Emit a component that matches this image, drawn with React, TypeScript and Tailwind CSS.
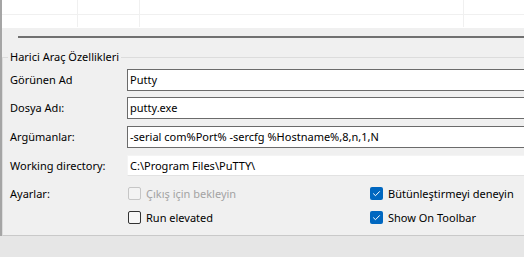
import React from "react";

const font = { fontFamily: '"Noto Sans", "Open Sans", sans-serif' };

function Box({ checked, disabled }: { checked?: boolean; disabled?: boolean }) {
  if (checked) {
    return (
      <span className="flex h-[13px] w-[13px] items-center justify-center rounded-[2px] bg-[#0067c0]">
        <svg width="13" height="13" viewBox="0 0 13 13" fill="none">
          <path d="M3.5 6.8 L5.5 8.7 L9.5 4.6" stroke="#ffffff" strokeWidth="1" strokeLinecap="round" strokeLinejoin="round" />
        </svg>
      </span>
    );
  }
  return (
    <span
      className={
        disabled
          ? "h-[13px] w-[13px] rounded-[2px] border border-[#c6c6c6] bg-[#f3f3f3]"
          : "h-[13px] w-[13px] rounded-[2px] border border-[#333333] bg-[#f7f7f7]"
      }
    />
  );
}

function Check({ label, checked, disabled }: { label: string; checked?: boolean; disabled?: boolean }) {
  return (
    <div className="flex h-[13px] items-center gap-[5px]">
      <Box checked={checked} disabled={disabled} />
      <span className={disabled ? "text-[#a3a3a3]" : "text-black"}>{label}</span>
    </div>
  );
}

function Row({ label, value, plain, mt }: { label: string; value: string; plain?: boolean; mt: string }) {
  return (
    <div className={`flex items-center ${mt}`}>
      <div className="w-[117px] shrink-0">{label}</div>
      <div
        className={
          plain
            ? "flex h-[21px] w-[420px] shrink-0 items-center border border-[#f4f4f4] border-b-[#e2e2e2] bg-white pl-[2px]"
            : "flex h-[22px] w-[420px] shrink-0 items-center border border-[#6b6b6b] bg-white pl-[2px]"
        }
      >
        {value}
      </div>
    </div>
  );
}

export default function App() {
  return (
    <div className="flex h-[257px] w-[524px] flex-col overflow-hidden bg-[#e6e6e6] text-[11px] leading-[16px] text-black" style={font}>
      <div className="h-[236px] shrink-0 border-l-2 border-[#a5a5a5] bg-[#f0f0f0]">
        <div className="h-[28px] bg-white">
          <div className="grid h-[15px] grid-cols-[75px_1px_61px_1px_323px_1px_1fr] border-b border-[#f0f0f0]">
            <div />
            <div className="bg-[#f0f0f0]" />
            <div />
            <div className="bg-[#f0f0f0]" />
            <div />
            <div className="bg-[#f0f0f0]" />
            <div />
          </div>
          <div className="grid h-[12px] grid-cols-[75px_1px_61px_1px_323px_1px_1fr]">
            <div />
            <div className="bg-[#f0f0f0]" />
            <div />
            <div className="bg-[#f0f0f0]" />
            <div />
            <div className="bg-[#f0f0f0]" />
            <div />
          </div>
        </div>
        <div className="ml-[16px] mt-[8px] h-[2px] bg-[#707070]" />
        <fieldset className="mt-[11px] h-[187px] border-y border-l border-[#dcdcdc] border-b-[#c9c9c9] pl-[7px]">
          <legend className="-ml-[2px] px-[2px]">Harici Araç Özellikleri</legend>
          <Row label="Görünen Ad" value="Putty" mt="mt-[4px]" />
          <Row label="Dosya Adı:" value="putty.exe" mt="mt-[6px]" />
          <Row label="Argümanlar:" value="-serial com%Port% -sercfg %Hostname%,8,n,1,N" mt="mt-[7px]" />
          <Row label="Working directory:" value="C:\Program Files\PuTTY\" plain mt="mt-[7px]" />
          <div className="mt-[11px] flex">
            <div className="w-[118px] shrink-0 leading-[13px]">Ayarlar:</div>
            <div className="grid grid-cols-[242px_1fr] gap-y-[11px]">
              <Check label="Çıkış için bekleyin" disabled />
              <Check label="Bütünleştirmeyi deneyin" checked />
              <Check label="Run elevated" />
              <Check label="Show On Toolbar" checked />
            </div>
          </div>
        </fieldset>
      </div>
    </div>
  );
}
